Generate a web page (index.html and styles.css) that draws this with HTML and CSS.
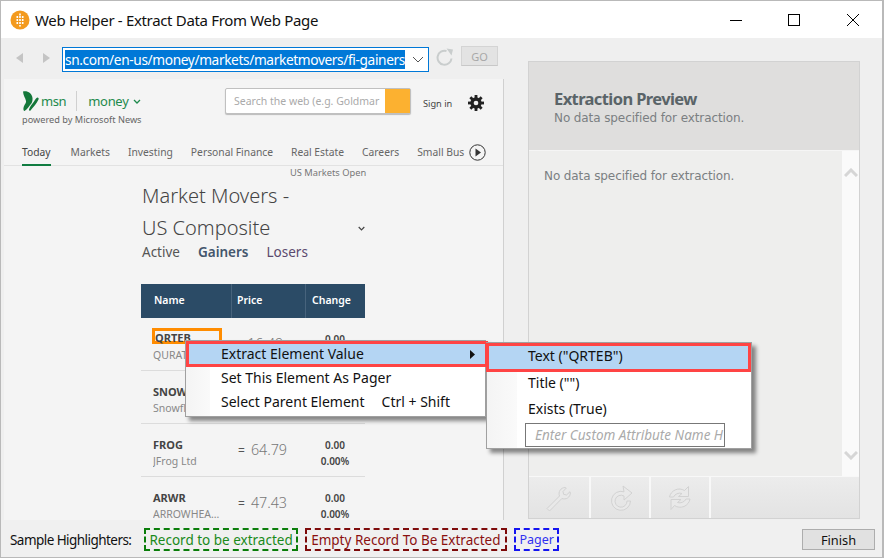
FILE: index.html
```html
<!DOCTYPE html>
<html lang="en">
<head>
<meta charset="utf-8">
<title>Web Helper</title>
<link rel="stylesheet" href="styles.css">
</head>
<body>
<div class="window">
  <header class="titlebar">
    <svg class="app-icon" width="20" height="20" viewBox="0 0 20 20"><circle cx="10" cy="10" r="9.5" fill="#f39a1e"/><g fill="#fff"><rect x="9.2" y="3.5" width="1.6" height="2"/><rect x="6.5" y="6" width="1.6" height="2"/><rect x="9.2" y="6" width="1.6" height="2"/><rect x="11.9" y="6" width="1.6" height="2"/><rect x="6.5" y="9" width="1.6" height="2"/><rect x="9.2" y="9" width="1.6" height="2"/><rect x="11.9" y="9" width="1.6" height="2"/><rect x="6.5" y="12" width="1.6" height="2"/><rect x="9.2" y="12" width="1.6" height="2"/><rect x="11.9" y="12" width="1.6" height="2"/><rect x="9.2" y="15" width="1.6" height="1.6"/></g></svg>
    <span class="title-text">Web Helper - Extract Data From Web Page</span>
    <div class="win-controls">
      <svg width="12" height="12" viewBox="0 0 12 12"><path d="M0 6.5h12" stroke="#000" stroke-width="1"/></svg>
      <svg width="12" height="12" viewBox="0 0 12 12"><rect x=".5" y=".5" width="11" height="11" fill="none" stroke="#000"/></svg>
      <svg class="win-close" width="12" height="12" viewBox="0 0 12 12"><path d="M0 0l12 12M12 0L0 12" stroke="#000" fill="none"/></svg>
    </div>
  </header>

  <div class="main">
    <section class="left">
      <div class="toolbar">
        <svg class="nav-arrow" width="8" height="10" viewBox="0 0 8 10"><path d="M7 0v10L0 5z" fill="#c4c4c4"/></svg>
        <svg class="nav-arrow next" width="8" height="10" viewBox="0 0 8 10"><path d="M1 0v10l7-5z" fill="#c4c4c4"/></svg>
        <div class="combo">
          <span class="url">sn.com/en-us/money/markets/marketmovers/fi-gainers</span>
          <svg width="12" height="7" viewBox="0 0 12 7"><path d="M1 1l5 5 5-5" fill="none" stroke="#555" stroke-width="1"/></svg>
        </div>
        <svg class="reload" width="18" height="18" viewBox="0 0 18 18"><path d="M15.5 10.5A7 7 0 1 1 10.5 3" fill="none" stroke="#c9cdcd" stroke-width="2"/><path d="M10.5 .5L17 1.5 15.5 7.5z" fill="#c9cdcd"/></svg>
        <button class="go">GO</button>
      </div>
      <div class="page">
        <div class="msn-head">
          <div class="brand">
            <div class="brand-row">
              <svg width="19" height="20" viewBox="0 0 19 20"><path d="M1 .5C5-.8 10 2 10.500 7c.2 3-.5 5-2 6.500-1.500 1.800-3 4.500-6 6.500-1.500-.5-1.500-3.500 0-6 1-1.500 1.800-2.500 1.500-4C3.500 7 1.200 4.500 1 .5z" fill="#14773a"/><path d="M15.500 6.500c1 0 1.500 1 1 2-2 4-5 7.500-8 11-1 .5-1.800 0-1.500-1 1-3 3-5.500 5-8 1-1.500 2.200-4 3.500-4z" fill="#14773a"/></svg>
              <span class="msn">msn</span>
              <span class="brand-sep"></span>
              <span class="money">money</span>
              <svg width="8" height="5" viewBox="0 0 8 5"><path d="M1 1l3 3 3-3" fill="none" stroke="#1e8a4c" stroke-width="1.3"/></svg>
            </div>
            <div class="powered">powered by Microsoft News</div>
          </div>
          <div class="search"><span class="search-text">Search the web (e.g. Goldmar</span><span class="search-btn"></span></div>
          <span class="signin">Sign in</span>
          <svg class="gear" width="16" height="16" viewBox="0 0 17 17"><g fill="#222"><circle cx="8.5" cy="8.500" r="6"/><rect x="7" y="0" width="3" height="17"/><rect x="0" y="7" width="17" height="3"/><rect x="7" y="0" width="3" height="17" transform="rotate(45 8.500 8.500)"/><rect x="7" y="0" width="3" height="17" transform="rotate(-45 8.500 8.500)"/></g><circle cx="8.5" cy="8.500" r="2.500" fill="#f4f4f4"/></svg>
        </div>
        <nav class="tabs">
          <span class="tab active">Today</span>
          <span class="tab">Markets</span>
          <span class="tab">Investing</span>
          <span class="tab">Personal Finance</span>
          <span class="tab">Real Estate</span>
          <span class="tab">Careers</span>
          <span class="tab last">Small Bus</span>
          <svg class="tab-next" width="17" height="17" viewBox="0 0 17 17"><circle cx="8.500" cy="8.500" r="7.700" fill="none" stroke="#333" stroke-width="1"/><path d="M6.500 4.500v8l5.500-4z" fill="#333"/></svg>
        </nav>
        <div class="content">
          <div class="status">US Markets Open</div>
          <h1 class="mm-title">Market Movers -</h1>
          <div class="mm-sub"><span>US Composite</span><svg width="7" height="5" viewBox="0 0 7 5"><path d="M.7 1l2.800 2.800L6.300 1" fill="none" stroke="#444" stroke-width="1.200"/></svg></div>
          <div class="mm-tabs"><span>Active</span><b>Gainers</b><span class="visited">Losers</span></div>
          <div class="table">
            <div class="thead"><span class="c1">Name</span><span class="c2">Price</span><span class="c3">Change</span></div>
            <div class="row">
              <div class="c1"><b class="sym picked">QRTEB</b><span class="co">QURATE RETAIL</span></div>
              <div class="c2 price"><span class="eq">&nbsp;</span>16.49</div>
              <div class="c3"><b>0.00</b><b>0.00%</b></div>
            </div>
            <div class="row">
              <div class="c1"><b class="sym">SNOW</b><span class="co">Snowflake Inc</span></div>
              <div class="c2 price"><span class="eq">=</span>240.2</div>
              <div class="c3"><b>0.00</b><b>0.00%</b></div>
            </div>
            <div class="row">
              <div class="c1"><b class="sym">FROG</b><span class="co">JFrog Ltd</span></div>
              <div class="c2 price"><span class="eq">=</span>64.79</div>
              <div class="c3"><b>0.00</b><b>0.00%</b></div>
            </div>
            <div class="row">
              <div class="c1"><b class="sym">ARWR</b><span class="co">ARROWHEA...</span></div>
              <div class="c2 price"><span class="eq">=</span>47.43</div>
              <div class="c3"><b>0.00</b><b>0.00%</b></div>
            </div>
          </div>
        </div>
      </div>
    </section>

    <aside class="right">
      <div class="preview">
        <div class="preview-head">
          <h2>Extraction Preview</h2>
          <p>No data specified for extraction.</p>
        </div>
        <div class="preview-body">
          <div class="preview-text">No data specified for extraction.</div>
          <div class="scroll">
            <svg width="14" height="9" viewBox="0 0 14 9"><path d="M1 8l6-6 6 6" fill="none" stroke="#d6d6d6" stroke-width="3"/></svg>
            <svg width="14" height="9" viewBox="0 0 14 9"><path d="M1 1l6 6 6-6" fill="none" stroke="#d6d6d6" stroke-width="3"/></svg>
          </div>
        </div>
        <div class="preview-tools">
          <span class="tool tool-first"><svg class="tool-icon" width="26" height="26" viewBox="0 0 26 26"><path d="M1 23.500L13.500 11c-1.500-4 1-8.500 6-8.500l.8.500-3.300 3.500.6 2.800 2.900.7 3.500-3.300.4.800c0 5-4.500 7.500-8.500 6L3.500 26z" /></svg></span>
          <span class="tool"><svg class="tool-icon" width="26" height="26" viewBox="0 0 26 26"><path d="M16 1l9 7-8 7v-4a6 6 0 1 0 3 5h3.500a9.500 9.500 0 1 1-6.500-9.200z"/></svg></span>
          <span class="tool"><svg class="tool-icon" width="26" height="26" viewBox="0 0 26 26"><path d="M21.500 1.500v10h-10l3.500-3a7 7 0 0 0-8.500 3.500H2.500A10 10 0 0 1 17.500 5.500zM4 24.500v-10h10l-3.500 3a7 7 0 0 0 8.500-3.500h4A10 10 0 0 1 7.500 20.500z"/></svg></span>
          <span class="tool-rest"></span>
        </div>
      </div>
    </aside>
  </div>

  <footer class="footer">
    <span class="sample">Sample Highlighters:</span>
    <span class="hl green">Record to be extracted</span>
    <span class="hl red">Empty Record To Be Extracted</span>
    <span class="hl blue">Pager</span>
    <button class="finish">Finish</button>
  </footer>

  <div class="menu menu-main">
    <div class="mi hot">Extract Element Value<svg class="sub-arrow" width="5" height="9" viewBox="0 0 5 9"><path d="M0 0l5 4.500L0 9z" fill="#111"/></svg></div>
    <div class="mi">Set This Element As Pager</div>
    <div class="mi">Select Parent Element<span class="shortcut">Ctrl + Shift</span></div>
  </div>
  <div class="menu menu-sub">
    <div class="mi hot">Text ("QRTEB")</div>
    <div class="mi">Title ("")</div>
    <div class="mi">Exists (True)</div>
    <div class="custom">Enter Custom Attribute Name H</div>
  </div>
</div>
</body>
</html>
```
FILE: styles.css
```css
* { box-sizing: border-box; }
html, body { margin: 0; padding: 0; }
body { width: 884px; height: 558px; overflow: hidden; font-family: "Noto Sans", sans-serif; }
.window { position: relative; width: 884px; height: 558px; border: 1px solid #b9b9b9; border-right-width: 2px; background: #efefef; display: flex; flex-direction: column; overflow: hidden; }

.titlebar { height: 37px; background: #fff; display: flex; align-items: center; padding-left: 9px; flex: none; }
.app-icon { margin-right: 5px; }
.title-text { font-size: 15px; letter-spacing: -.33px; color: #111; }
.win-controls { margin-left: auto; display: flex; align-items: center; gap: 46px; padding-right: 23px; }
.win-close { margin-left: 1px; }

.main { flex: 1; display: flex; min-height: 0; }
.left { width: 503px; flex: none; display: flex; flex-direction: column; min-height: 0; }
.toolbar { height: 41px; flex: none; display: flex; align-items: center; padding-left: 15px; position: relative; }
.nav-arrow { margin-right: 18px; margin-top: -1px; }
.nav-arrow.next { margin-right: 12px; }
.combo { width: 367px; height: 25px; border: 1px solid #0078d7; background: #fff; display: flex; align-items: center; justify-content: space-between; padding: 0 4px 0 2px; margin-top: 1px; }
.url { background: #0078d7; color: #fff; font-size: 13.7px; letter-spacing: -.37px; line-height: 19px; width: 340px; white-space: nowrap; overflow: hidden; }
.reload { margin-left: 7px; margin-top: -4px; }
.go { margin-left: 7px; width: 37px; height: 20px; margin-top: -5px; border: 1px solid #d4d4d4; border-bottom-color: #c8c8c8; background: #e3e3e3; color: #a8a8a8; font: 11px "Noto Sans", sans-serif; padding: 0; }

.page { flex: 1; min-height: 0; overflow: hidden; background: #f4f4f4; margin-left: 3px; border-right: 1px solid #d0d0d0; color: #555; }
.msn-head { height: 57px; display: flex; position: relative; padding: 9px 0 0 18px; }
.brand { width: 203px; padding-top: 3px; }
.brand-row { display: flex; align-items: center; height: 20px; }
.msn { font-size: 13px; letter-spacing: -.4px; color: #1e8a4c; }
.brand-sep { width: 1px; height: 20px; background: #d0d0d0; margin: 0 11px 0 10px; }
.money { font-size: 13px; letter-spacing: -.3px; color: #1e8a4c; margin-right: 5px; }
.powered { font-size: 9.2px; color: #666; margin-top: 2px; white-space: nowrap; }
.search { width: 186px; height: 26px; border: 1px solid #c0c0c0; border-radius: 2px; background: #fff; display: flex; align-items: center; box-shadow: 0 1px 1px #bbb; }
.search-text { flex: 1; font-size: 10.5px; color: #aaa; padding-left: 8px; white-space: nowrap; overflow: hidden; }
.search-btn { width: 25px; height: 24px; background: #fcb130; flex: none; }
.signin { font-size: 9.2px; color: #444; margin: 9px 0 0 12px; white-space: nowrap; }
.gear { margin: 7px 0 0 16px; }

.tabs { height: 30px; display: flex; align-items: flex-start; padding: 9px 0 0 18px; border-bottom: 1px solid #e2e2e2; font-size: 10.3px; color: #666; position: relative; }
.tab { height: 21px; margin-right: 18px; white-space: nowrap; }
.tab.active { color: #444; border-bottom: 2px solid #107c41; margin-right: 20px; }
.tab.last { margin-right: 5px; }
.tab-next { margin-top: -1px; }

.content { padding-left: 138px; position: relative; }
.status { position: absolute; left: 286px; top: 0; font-size: 9.3px; color: #777; white-space: nowrap; }
.mm-title { margin: 0; padding-top: 14px; font-size: 20px; font-weight: 300; line-height: 32px; color: #444; }
.mm-sub { width: 223px; display: flex; justify-content: space-between; align-items: center; font-size: 20px; font-weight: 300; line-height: 32px; color: #444; }
.mm-tabs { display: flex; gap: 18px; font-size: 13.5px; color: #555; line-height: 16px; }
.mm-tabs b { font-weight: 600; color: #44566c; }
.mm-tabs .visited { color: #5b4a6e; }

.table { width: 224px; margin: 24px 0 0 -1px; font-size: 10.5px; }
.thead { height: 34px; background: #2b4b66; color: #fff; display: grid; grid-template-columns: 90px 74px 60px; align-items: center; font-weight: 600; }
.thead .c1 { padding: 0 0 2px 13px; }
.thead .c2 { padding-left: 5px; border-left: 1px solid #47637c; height: 34px; line-height: 32px; }
.thead .c3 { padding-left: 6px; border-left: 1px solid #47637c; height: 34px; line-height: 32px; }
.row { height: 53px; display: grid; grid-template-columns: 88px 76px 60px; align-items: start; border-bottom: 1px solid #dcdcdc; padding-top: 13px; }
.row .c1 { padding-left: 12px; display: flex; flex-direction: column; }
.sym { font-size: 11px; font-weight: 700; color: #444; line-height: 16px; }
.sym.picked { width: 70px; height: 16px; border: 3px solid #ff8c00; margin: -3px 0 3px -1px; line-height: 14px; }
.co { font-size: 10.5px; color: #888; line-height: 16px; white-space: nowrap; overflow: hidden; }
.price { font-size: 14.3px; font-weight: 300; color: #777; line-height: 28px; margin-top: -1px; padding-left: 9px; white-space: nowrap; }
.eq { font-size: 12px; font-weight: 400; margin-right: 6px; color: #555; }
.row .c3 { display: flex; flex-direction: column; align-items: center; width: 60px; }
.row .c3 b { font-size: 10px; font-weight: 600; color: #444; line-height: 16px; }

.right { flex: 1; padding: 23px 0 0 24px; min-width: 0; }
.preview { width: 332px; height: 458px; display: flex; flex-direction: column; border: 1px solid #d2d2d2; }
.preview-head { height: 89px; background: #dfdedd; padding: 27px 0 0 25px; border-bottom: 1px solid #f5f5f5; flex: none; }
.preview-head h2 { margin: 0; font-size: 16.5px; font-weight: 700; line-height: 20px; letter-spacing: -0.6px; color: #5a6468; }
.preview-head p { margin: 2px 0 0; font: 12px/14px "DejaVu Sans", sans-serif; color: #7b7f82; letter-spacing: -.1px; }
.preview-body { flex: 1; display: flex; min-height: 0; background: #eeeeed; }
.preview-text { flex: 1; padding: 18px 0 0 15px; font: 12px/14px "DejaVu Sans", sans-serif; color: #7b7f82; letter-spacing: -.1px; }
.scroll { width: 17px; background: #fafafa; display: flex; flex-direction: column; justify-content: space-between; align-items: center; padding: 17px 0 16px; }
.preview-tools { height: 42px; flex: none; display: flex; background: linear-gradient(#ececec, #e3e3e3); border-top: 1px solid #f8f8f8; }
.tool { width: 60px; display: flex; align-items: center; justify-content: center; border-right: 2px solid #f8f8f8; }
.tool-first { width: 62px; }
.tool-icon path { fill: #e9e9e9; stroke: #d2d2d2; stroke-width: 1; }
.tool-rest { flex: 1; }

.footer { flex: none; height: 37px; display: flex; align-items: center; padding: 2px 7px 0 9px; font-size: 13.5px; background: #f0f0f0; }
.sample { color: #111; margin-right: 13px; letter-spacing: -.55px; }
.hl { height: 23px; line-height: 20px; padding: 0 3px; margin-right: 7px; white-space: nowrap; }
.hl.green { border: 2px dashed #0a7d0a; color: #1a8a1a; }
.hl.red { border: 2px dashed #7d0a0a; color: #8b1010; padding: 0 4.5px; }
.hl.blue { border: 2px dashed #1414f0; color: #3030f0; font-size: 12.5px; padding: 0 3.5px; }
.finish { margin-left: auto; width: 73px; height: 21px; background: #e1e1e1; border: 1px solid #adadad; font: 12.8px "Noto Sans", sans-serif; color: #111; padding: 0; }

.menu { position: absolute; background: #fff; font-size: 14px; color: #111; box-shadow: 4px 4px 4px rgba(0,0,0,.45); border: 1px solid #a0a0a0; }
.menu::before { content: ""; position: absolute; left: 0; top: 0; bottom: 0; width: 24px; background: linear-gradient(90deg, #f4f4f4, #fafafa); }
.mi { position: relative; white-space: nowrap; }
.mi.hot { background: #b4d5f3; }
.mi.hot::after { content: ""; position: absolute; inset: -1px -3px -1px 0; border: 3px solid #ff4444; pointer-events: none; }
.menu-main { left: 184px; top: 339px; width: 301px; height: 77px; padding-top: 1px; }
.menu-main .mi { padding-left: 35px; height: 24px; line-height: 23px; }
.sub-arrow { position: absolute; right: 10px; top: 8px; }
.shortcut { margin-left: 17px; }
.menu-sub { left: 485px; top: 341px; width: 266px; height: 107px; }
.menu-sub .mi { padding-left: 41px; height: 26px; line-height: 24px; }
.menu-sub .mi.hot { height: 28px; line-height: 25px; }
.menu-sub .mi.hot::after { inset: 0 0 -1px -1px; }
.menu-sub::before { width: 30px; }
.custom { position: relative; margin: 0 0 0 38px; width: 200px; height: 24px; border: 1px solid #777; font-style: italic; color: #aaa; font-size: 13.5px; line-height: 22px; padding-left: 9px; white-space: nowrap; overflow: hidden; background: #fff; }
```
